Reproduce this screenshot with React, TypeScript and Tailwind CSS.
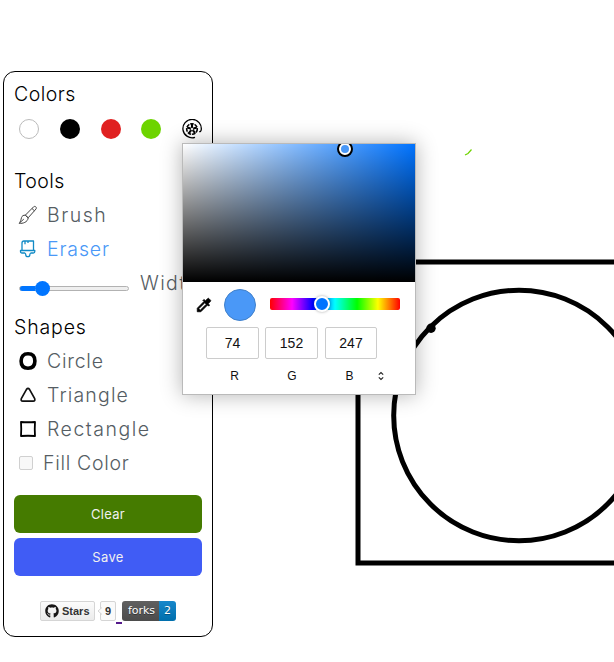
import React from "react";
import { FaGithub } from "react-icons/fa";

const sans = "font-['Inter',sans-serif]";
const arial = "font-['Liberation_Sans',Arial,sans-serif]";

function Canvas() {
  return (
    <svg className="absolute left-0 top-0" width="614" height="662" fill="none" stroke="#000" strokeWidth="5">
      <rect x="358" y="262" width="320" height="301" />
      <circle cx="519" cy="415.5" r="125.3" />
      <circle cx="431" cy="328.3" r="4.7" fill="#000" stroke="none" />
      <path d="M465 155l3-1.5 3.5-4" stroke="#6fd400" strokeWidth="1.2" />
    </svg>
  );
}

function PaletteIcon() {
  return (
    <svg width="20" height="20" viewBox="0 0 20 20" fill="none" stroke="#000" strokeWidth="1.3">
      <path d="M13 18.3A9.2 9.2 0 1 1 19.2 11c-.2 1.4-1 1.8-2 1.6" />
      <circle cx="10" cy="10" r="5.3" strokeWidth="1.6" strokeDasharray="3.6 .9" />
      <path d="M10 5v3.4M14.8 8.4l-3.2 1.1M13 14l-2-2.7M7 14l2-2.7M5.2 8.4l3.2 1.1" strokeWidth="2.1" />
      <circle cx="10" cy="10" r="1.6" strokeWidth=".8" />
    </svg>
  );
}

function BrushIcon() {
  return (
    <svg width="20" height="20" viewBox="0 0 20 20" fill="none" stroke="#444" strokeWidth="1">
      <path d="M7.3 10.2L15.6 1.8c1.5-1.2 3.6.6 2.4 2.2l-7.8 8.8zM14 3.5l2.4 2.3M7.3 10.2l2.9 2.6M7.3 10.2c-1.8-.2-3.3.6-3.8 2.4-.5 2-1 4.2-2.3 5.8 3.6.2 8.4-1 9-5.6M1.8 17.7l4-3.6" />
    </svg>
  );
}

function EraserIcon() {
  return (
    <svg width="20" height="20" viewBox="0 0 20 20" fill="none" stroke="#118ac5" strokeWidth="1.3" strokeLinejoin="round">
      <path d="M4 11.5V4c0-1.4.6-2 2-2h9.5v9.5M7 2v3.3M10 2v2M2.5 11.5h14.3v1c0 1-.6 1.5-1.5 1.5h-2.5c-1 .4-1 1.2-1 2 0 1-.8 1.7-2 1.7s-2-.7-2-1.7c0-.8 0-1.6-1-2H4c-1 0-1.5-.5-1.5-1.5z" />
    </svg>
  );
}

function Row({ icon, label, tracking, tone = "text-[#555d63]" }: { icon: React.ReactNode; label: string; tracking: string; tone?: string }) {
  return (
    <div className="flex h-[34px] items-center pl-1">
      <span className="flex w-[29px] shrink-0 items-center">{icon}</span>
      <span className={`pt-[2px] text-[19.5px] font-light leading-none ${tracking} ${tone}`}>{label}</span>
    </div>
  );
}

function Sidebar() {
  return (
    <aside className={`ml-[3px] mt-[71px] h-[566px] w-[210px] rounded-[12px] border border-black px-[10px] pt-[7px] ${sans}`}>
      <h2 className="flex h-[30px] items-center pt-[2px] text-[19.5px] font-[350] tracking-[0.5px]">Colors</h2>
      <div className="ml-[5px] flex h-10 w-[183px] items-center justify-between">
        <span className="size-5 rounded-full border border-[#bbb] bg-white" />
        <span className="size-5 rounded-full bg-black" />
        <span className="size-5 rounded-full bg-[#e02020]" />
        <span className="size-5 rounded-full bg-[#6dd400]" />
        <PaletteIcon />
      </div>
      <h2 className="mt-[17px] flex h-[30px] items-center pt-[2px] text-[19.5px] font-[350] tracking-[0.4px]">Tools</h2>
      <div className="mt-[2px]">
        <Row icon={<BrushIcon />} label="Brush" tracking="tracking-[1.5px]" />
        <Row icon={<EraserIcon />} label="Eraser" tracking="tracking-[0.85px]" tone="text-[#4a98f7]" />
      </div>
      <div className="flex h-[46px] pl-[5px]">
        <div className="mt-[20px] flex h-[5px] w-[110px] items-center rounded-full border border-[#b2b2b2] bg-[#efefef]">
          <span className="h-[5px] w-[15px] rounded-l-full bg-[#0075ff]" />
          <span className="size-[15px] shrink-0 rounded-full bg-[#0075ff]" />
        </div>
        <span className="ml-[11px] mt-[5px] text-[19.5px] font-light leading-6 tracking-[1.3px] text-[#555d63]">Width</span>
      </div>
      <h2 className="flex h-[30px] items-center pt-[2px] text-[19.5px] font-[350] tracking-[0.85px]">Shapes</h2>
      <div className="mt-[2px]">
        <Row
          icon={<svg width="20" height="20" fill="none" stroke="#000" strokeWidth="3.6"><path d="M10 2.8c4.6 0 6.9 2.5 6.9 7.2s-2.3 7.2-6.9 7.2S3.1 14.7 3.1 10 5.4 2.8 10 2.8z" /></svg>}
          label="Circle"
          tracking="tracking-[0.75px]"
        />
        <Row
          icon={<svg width="20" height="20" fill="none" stroke="#111" strokeWidth="1.7" strokeLinejoin="round"><path d="M8.5 4.4q1.5-1.9 3 0l5.2 9.3q.7 2.4-1.5 2.4H4.8q-2.2 0-1.5-2.4z" /></svg>}
          label="Triangle"
          tracking="tracking-[1.15px]"
        />
        <Row
          icon={<svg width="20" height="20" fill="none" stroke="#000" strokeWidth="1.8" strokeLinejoin="round"><path d="M3 3q7 .5 14 0q-.5 7 0 14q-7-.5-14 0q.5-7 0-14z" /></svg>}
          label="Rectangle"
          tracking="tracking-[1.5px]"
        />
        <div className="flex h-[34px] items-center gap-[10px] pl-[5px]">
          <span className="size-[14px] rounded-[2px] border border-[#d0d0d0] bg-[#f8f8f8]" />
          <span className="pt-[2px] text-[19.5px] font-light leading-none tracking-[0.7px] text-[#555d63]">Fill Color</span>
        </div>
      </div>
      <div className="mt-[15px] flex flex-col gap-[5px] text-[13px] tracking-[0.3px] text-[#f0f0f0]">
        <button className="h-[38px] rounded-[6px] bg-[#457b00] pt-[2px]">Clear</button>
        <button className="h-[38px] rounded-[6px] bg-[#405cf5] pt-[2px]">Save</button>
      </div>
      <Badges />
    </aside>
  );
}

function Badges() {
  return (
    <div className="ml-[26px] mt-[25px] flex h-[24px] items-start">
      <span className={`flex h-5 w-[55px] items-center gap-[3px] rounded-[2px] border border-[#d5d5d5] bg-linear-to-b from-[#fcfcfc] to-[#ebebeb] pl-1 text-[11px] font-bold text-[#333] ${arial}`}>
        <FaGithub size={14} className="shrink-0 text-[#181717]" />Stars
      </span>
      <span className={`relative ml-[5px] flex h-5 w-4 items-center justify-center rounded-[2px] border border-[#d5d5d5] bg-[#fafafa] text-[11px] font-bold text-[#333] ${arial}`}>
        <svg className="absolute -left-[4px] top-[5px]" width="5" height="8" fill="#fafafa" stroke="#d5d5d5"><path d="M5 .5L1 4l4 3.5" /></svg>
        9
      </span>
      <span className="mt-[21px] h-[2px] w-[6px] bg-[#551a8b]" />
      <span className="flex h-5 w-[54px] overflow-hidden rounded-[3px] font-['DejaVu_Sans',sans-serif] text-[11px] leading-5 text-white">
        <span className="w-[37px] bg-linear-to-b from-[#606060] to-[#4c4c4c] pl-[2px] text-center [text-shadow:0_1px_#333]">forks</span>
        <span className="w-[17px] bg-linear-to-b from-[#1687cb] to-[#006fad] text-center [text-shadow:0_1px_#035584]">2</span>
      </span>
    </div>
  );
}

function ColorPicker() {
  return (
    <div className={`absolute left-[182px] top-[143px] h-[252px] w-[234px] border border-[#bababa] bg-white shadow-[0_0_20px_rgba(0,0,0,0.3)] ${arial}`}>
      <div className="relative h-[138px] overflow-hidden bg-[#0073ff]">
        <div className="absolute inset-0 bg-linear-to-r from-white to-transparent" />
        <div className="absolute inset-0 bg-linear-to-b from-transparent to-black" />
        <div className="absolute -top-[3px] left-[154px] size-4 rounded-full border-2 border-black bg-white p-[2px]">
          <div className="size-2 rounded-full bg-[#4a98f7]" />
        </div>
      </div>
      <div className="flex h-[46px] items-center">
        <svg className="ml-3 shrink-0" width="18" height="18" viewBox="0 0 24 24">
          <path d="M20.7 5.6l-2.3-2.3a1 1 0 0 0-1.4 0l-3.1 3.1-2-1.9-1.4 1.4 1.4 1.4L3 16.3V21h4.8l8.9-8.9 1.4 1.4 1.4-1.4-1.9-1.9 3.1-3.1c.4-.4.4-1 0-1.5zM6.9 19L5 17.1l8.1-8.1 1.9 1.9z" fill="#000" stroke="#000" />
        </svg>
        <span className="ml-[11px] size-8 rounded-full border border-[#4080ca] bg-[#4a98f7]" />
        <div className="relative mb-[2px] ml-[14px] h-3 w-[130px] rounded-[2px] bg-[linear-gradient(to_right,#f00,#f0f_17%,#00f_33%,#0ff_50%,#0f0_67%,#ff0_83%,#f00)]">
          <span className="absolute left-[44px] -top-[2px] size-4 rounded-full border-2 border-white bg-[#0073ff] shadow-[0_0_3px_rgba(0,0,0,0.35)]" />
        </div>
      </div>
      <div className="-mt-px ml-[23px] flex gap-[6px] text-center text-[14px] leading-[30px] text-[#111]">
        <span className="h-8 w-[53px] rounded-[2px] border border-[#ccc]">74</span>
        <span className="h-8 w-[53px] rounded-[2px] border border-[#ccc]">152</span>
        <span className="ml-px h-8 w-[52px] rounded-[2px] border border-[#ccc]">247</span>
      </div>
      <div className="ml-[23px] mt-[10px] flex h-[14px] items-center text-center text-[12px] text-[#111]">
        <span className="w-[57px]">R</span>
        <span className="w-[58px]">G</span>
        <span className="w-[57px]">B</span>
        <svg className="-ml-px" width="8" height="10" fill="none" stroke="#222" strokeWidth="1.1"><path d="M1.8 3.7L4 1.5l2.2 2.2M1.8 6.3L4 8.5l2.2-2.2" /></svg>
      </div>
    </div>
  );
}

export default function App() {
  return (
    <main className="relative flex h-[662px] w-[614px] items-start overflow-hidden bg-white">
      <Canvas />
      <Sidebar />
      <ColorPicker />
    </main>
  );
}
